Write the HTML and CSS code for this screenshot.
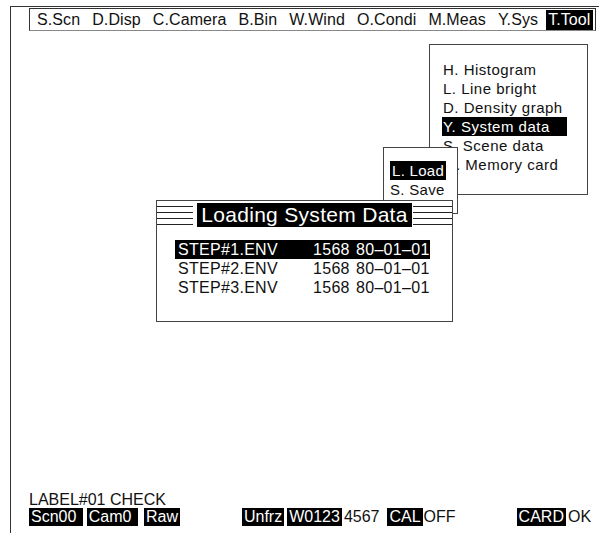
FILE: index.html
```html
<!DOCTYPE html>
<html lang="en">
<head>
  <meta charset="UTF-8">
  <title>Tool</title>
  <link rel="stylesheet" href="styles.css">
</head>
<body>

<div class="screen">
  <div class="menubar">
    <span class="mi">S.Scn</span>
    <span class="mi">D.Disp</span>
    <span class="mi">C.Camera</span>
    <span class="mi">B.Bin</span>
    <span class="mi">W.Wind</span>
    <span class="mi">O.Condi</span>
    <span class="mi">M.Meas</span>
    <span class="mi">Y.Sys</span>
    <span class="mi sel">T.Tool</span>
  </div>

  <!-- tool menu -->
  <div class="dropdown">
    <div class="item">H. Histogram</div>
    <div class="item">L. Line bright</div>
    <div class="item">D. Density graph</div>
    <div class="item"><span class="sel">Y. System data</span></div>
    <div class="item">S. Scene data</div>
    <div class="item">M. Memory card</div>
  </div>

  <div class="submenu">
    <div class="item"><span class="sel">L. Load</span></div>
    <div class="item">S. Save</div>
  </div>

  <div class="dialog">
    <div class="dlg-title"><span class="dlg-label">Loading System Data</span></div>
    <div class="files">
      <div class="row sel"><span>STEP#1.ENV</span><span>1568</span><span>80–01–01</span></div>
      <div class="row"><span>STEP#2.ENV</span><span>1568</span><span>80–01–01</span></div>
      <div class="row"><span>STEP#3.ENV</span><span>1568</span><span>80–01–01</span></div>
    </div>
  </div>

  <div class="status">
    <div class="label">LABEL#01 CHECK</div>
    <div class="bar">
      <span class="inv s-scn">Scn00&nbsp;</span>
      <span class="inv s-cam">Cam0&nbsp;</span>
      <span class="inv s-raw">Raw</span>
      <span class="inv s-frz">Unfrz</span>
      <span class="inv s-win">W0123</span>
      <span class="s-num">4567</span>
      <span class="inv s-cal">CAL</span>
      <span class="s-off">OFF</span>
      <span class="inv s-card">CARD</span>
      <span class="s-ok">OK</span>
    </div>
  </div>
</div>

</body>
</html>
```

FILE: styles.css
```css
body {
  margin: 0;
  font-family: "Liberation Sans", Arial, sans-serif;
  background-color: #ffffff;
  color: #111111;
}

.sel,
.inv {
  background-color: #000000;
  color: #ffffff;
}

.screen {
  position: relative;
  margin: 6px 0 0 10px;
  width: 588px;
  height: 527px;
  border-left: 1px solid #333333;
  border-top: 1px solid #333333;
  display: flex;
  flex-direction: column;
}

/* top menu */
.menubar {
  margin: 1px 0 0 18px;
  width: 558px;
  height: 21px;
  padding-left: 7px;
  border: 1px solid #333333;
  border-bottom-color: #888888;
  display: flex;
  align-items: center;
  gap: 12px;
  font-size: 16px;
  letter-spacing: 0.1px;
}

.menubar .sel {
  margin-left: -4px;
  padding: 1px 2px;
}

.dropdown {
  position: absolute;
  left: 418px;
  top: 37px;
  width: 159px;
  height: 151px;
  box-sizing: border-box;
  padding-top: 15px;
  border: 1px solid #444444;
  background-color: #ffffff;
  font-size: 15px;
}

.item {
  height: 19px;
  line-height: 19px;
  padding-left: 13px;
  letter-spacing: 0.5px;
}

.dropdown .sel {
  display: inline-block;
  margin-left: -1px;
  padding: 0 17px 0 1px;
}

.submenu {
  position: absolute;
  left: 372px;
  top: 140px;
  width: 75px;
  height: 67px;
  box-sizing: border-box;
  padding-top: 13px;
  border: 1px solid #444444;
  background-color: #ffffff;
  font-size: 15px;
}

.submenu .item {
  padding-left: 6px;
  letter-spacing: 0.3px;
}

.submenu .sel {
  display: inline-block;
  padding: 0 2px;
}

/* load dialog */
.dialog {
  position: absolute;
  left: 145px;
  top: 193px;
  width: 297px;
  height: 122px;
  box-sizing: border-box;
  border: 1px solid #444444;
  background-color: #ffffff;
}

.dlg-title {
  height: 27px;
  display: flex;
  justify-content: center;
  background: repeating-linear-gradient(to bottom, transparent 0 5px, #222222 5px 6px);
}

.dlg-label {
  margin-top: 2px;
  width: 215px;
  height: 24px;
  line-height: 24px;
  text-align: center;
  font-size: 21px;
  letter-spacing: 0.3px;
  background-color: #000000;
  color: #ffffff;
  box-shadow: -4px 0 0 #ffffff, 1px 0 0 #ffffff;
}

.files {
  padding: 12px 0 0 18px;
  font-size: 16px;
}

.row {
  width: 255px;
  height: 19px;
  line-height: 19px;
  display: grid;
  grid-template-columns: 135px 43px auto;
  padding-left: 3px;
  box-sizing: border-box;
  letter-spacing: 0.3px;
}

/* bottom status */
.status {
  margin-top: auto;
  padding: 0 0 8px 18px;
  font-size: 16px;
}

.label {
  height: 16px;
  line-height: 16px;
}

.bar {
  display: flex;
  height: 18px;
  line-height: 18px;
  white-space: nowrap;
}

.bar .inv {
  padding: 0 2px;
}

.s-cam { margin-left: 4px; }
.s-raw { margin-left: 6px; }
.s-frz { margin-left: 62px; }
.s-win { margin-left: 3px; }
.s-num { margin-left: 2px; }
.s-cal { margin-left: 8px; }
.s-off { margin-left: 1px; }
.s-card { margin-left: 61px; }
.s-ok { margin-left: 2px; }
```
